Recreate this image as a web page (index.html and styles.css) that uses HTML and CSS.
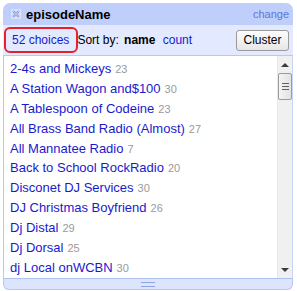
FILE: index.html
```html
<!DOCTYPE html>
<html lang="en">
<head>
    <meta charset="UTF-8">
    <title>Facet - episodeName</title>
    <link rel="stylesheet" href="styles.css">
</head>
<body>
    <div class="facet">
        <div class="facet-title">
            <span class="facet-close">
                <svg width="10" height="10" viewBox="0 0 10 10">
                    <rect x="0" y="0" width="10" height="10" fill="#dbe3fb"/>
                    <path d="M2 2 L8 8 M8 2 L2 8" stroke="#8ea2da" stroke-width="2.4"/>
                    <path d="M2 2 L8 8 M8 2 L2 8" stroke="#c4d1f5" stroke-width="0.8"/>
                </svg>
            </span>
            <span class="facet-name">episodeName</span>
            <a class="facet-change">change</a>
        </div>
        <div class="facet-controls">
            <a class="facet-count">52 choices</a>
            <span class="facet-sort">Sort by: <b>name</b> <a class="sort-link">count</a></span>
            <button class="cluster-button">Cluster</button>
            <span class="highlight-box"></span>
        </div>
        <div class="facet-body">
            <div class="facet-choices">
                <div class="choice"><a>2-4s and Mickeys</a><span class="choice-count">23</span></div>
                <div class="choice"><a>A Station Wagon and$100</a><span class="choice-count">30</span></div>
                <div class="choice"><a>A Tablespoon of Codeine</a><span class="choice-count">23</span></div>
                <div class="choice"><a>All Brass Band Radio (Almost)</a><span class="choice-count">27</span></div>
                <div class="choice"><a>All Mannatee Radio</a><span class="choice-count">7</span></div>
                <div class="choice"><a>Back to School RockRadio</a><span class="choice-count">20</span></div>
                <div class="choice"><a>Disconet DJ Services</a><span class="choice-count">30</span></div>
                <div class="choice"><a>DJ Christmas Boyfriend</a><span class="choice-count">26</span></div>
                <div class="choice"><a>Dj Distal</a><span class="choice-count">29</span></div>
                <div class="choice"><a>Dj Dorsal</a><span class="choice-count">25</span></div>
                <div class="choice"><a>dj Local onWCBN</a><span class="choice-count">30</span></div>
            </div>
            <div class="scrollbar">
                <span class="arrow arrow-up"></span>
                <span class="thumb"><span class="thumb-grip"></span></span>
                <span class="track"></span>
                <span class="arrow arrow-down"></span>
            </div>
        </div>
        <div class="facet-resize"><span class="grip"></span></div>
    </div>
</body>
</html>
```

FILE: styles.css
```css
body {
    margin: 3px;
    font-family: "Liberation Sans", Arial, sans-serif;
    background-color: #fff;
}

.facet {
    position: relative;
    width: 290px;
    display: flex;
    flex-direction: column;
}

.facet-title {
    height: 22px;
    background-color: #bfcefb;
    border-radius: 7px 7px 0 0;
    display: flex;
    align-items: center;
    padding: 0 4px 0 8px;
}

.facet-close {
    width: 10px;
    height: 10px;
    display: flex;
    margin-right: 5px;
    margin-top: -1px;
}

.facet-name {
    font-size: 13px;
    font-weight: bold;
    color: #000;
}

.facet-change {
    margin-left: auto;
    font-size: 11px;
    color: #5b78d6;
}

.facet-controls {
    position: relative;
    height: 30px;
    background-color: #e3e9ff;
    display: flex;
    align-items: center;
    padding: 0 4px 0 9px;
    font-size: 12px;
}

.facet-count {
    color: #1a1acc;
    margin-right: 8px;
}

.facet-sort {
    color: #000;
}

.facet-sort b {
    margin: 0 4px 0 2px;
}

.sort-link {
    color: #1a1acc;
}

.cluster-button {
    margin-left: auto;
    height: 21px;
    width: 53px;
    padding: 0;
    font-family: "Liberation Sans", Arial, sans-serif;
    font-size: 12px;
    color: #000;
    background: linear-gradient(#fdfdfd, #e6e6e6);
    border: 1px solid #9a9a9a;
    border-radius: 3px;
}

.highlight-box {
    position: absolute;
    left: 1px;
    top: 2px;
    width: 70px;
    height: 22px;
    border: 2px solid #e5222b;
    border-radius: 6px;
}

.facet-body {
    height: 222px;
    display: flex;
    background-color: #fff;
    border-top: 1px solid #b8c7f3;
    border-left: 1px solid #b8c7f3;
    border-right: 1px solid #c9d5f8;
}

.facet-choices {
    flex: 1;
    overflow: hidden;
    padding: 3px 0 0 6px;
}

.choice {
    height: 19.9px;
    line-height: 19.9px;
    font-size: 13px;
    white-space: nowrap;
}

.choice a {
    color: #1a1acc;
}

.choice-count {
    margin-left: 4px;
    font-size: 11px;
    color: #9a9a9a;
}

.scrollbar {
    width: 14px;
    display: flex;
    flex-direction: column;
    background-color: #f0f0f0;
    border-left: 1px solid #e8e8e8;
}

.arrow {
    height: 17px;
    display: flex;
    align-items: center;
    justify-content: center;
}

.arrow::after {
    content: "";
    border-left: 4px solid transparent;
    border-right: 4px solid transparent;
}

.arrow-up::after {
    border-bottom: 4px solid #3c3c3c;
}

.arrow-down::after {
    border-top: 4px solid #3c3c3c;
}

.thumb {
    height: 25px;
    background: linear-gradient(90deg, #f4f4f4, #e2e2e2);
    border: 1px solid #9c9c9c;
    border-radius: 2px;
    display: flex;
    align-items: center;
    justify-content: center;
}

.thumb-grip {
    width: 7px;
    height: 7px;
    background: repeating-linear-gradient(#606060 0 1px, transparent 1px 3px);
}

.track {
    flex: 1;
}

.facet-resize {
    height: 10px;
    background-color: #dce4fe;
    border: 1px solid #b8c7f3;
    border-top: 1px solid #aebff2;
    border-radius: 0 0 6px 6px;
    display: flex;
    align-items: center;
    justify-content: center;
}

.grip {
    width: 14px;
    height: 3px;
    border-top: 1px solid #8ea4e2;
    border-bottom: 1px solid #8ea4e2;
}
```
